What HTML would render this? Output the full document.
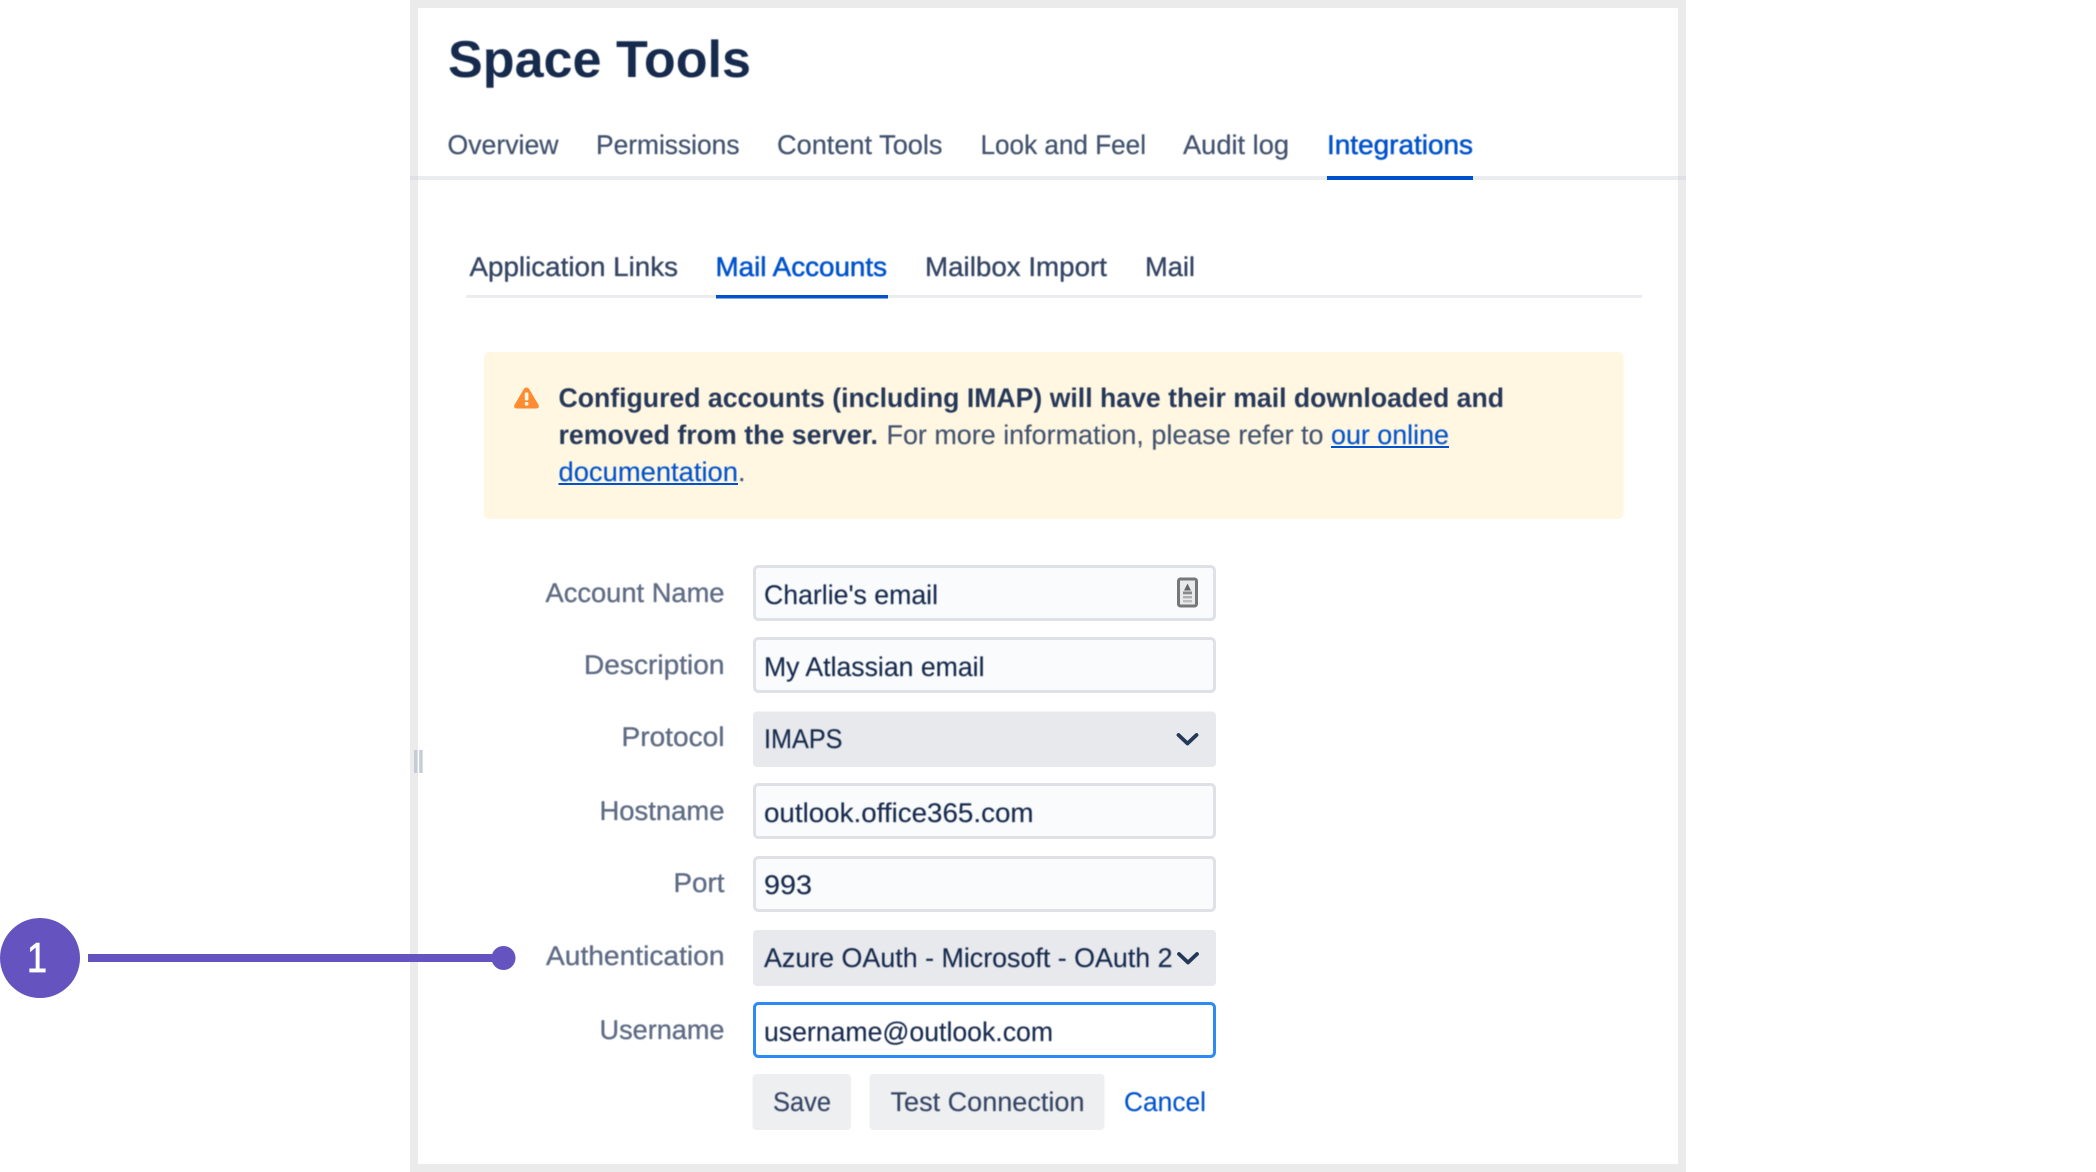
<!DOCTYPE html>
<html lang="en">
<head>
<meta charset="utf-8">
<title>Space Tools</title>
<style>
html,body{margin:0;padding:0;background:#fff;width:2096px;height:1172px;overflow:hidden}
svg{display:block;position:absolute;left:0;top:0}
text{font-family:"Liberation Sans",Arial,sans-serif;text-rendering:geometricPrecision}
.nav{font-size:27px;fill:#42526e;stroke:#42526e;stroke-width:.25}
.sub{font-size:27px;fill:#344563;stroke:#344563;stroke-width:.35}
.act{font-size:27px;fill:#0052cc;stroke:#0052cc;stroke-width:.55}
.lbl{font-size:27px;fill:#5e6c84;stroke:#5e6c84;stroke-width:.35}
.val{font-size:27px;fill:#172b4d;stroke:#172b4d;stroke-width:.15}
.al{font-size:27px;fill:#42526e;stroke:#42526e;stroke-width:.15}
.alb{font-size:27px;fill:#253858;font-weight:700}
.lnk{font-size:27px;fill:#0052cc;stroke:#0052cc;stroke-width:.15}
.btn{font-size:27px;fill:#344563;stroke:#344563;stroke-width:.15}
</style>
</head>
<body>
<svg width="2096" height="1172" viewBox="0 0 2096 1172" xmlns="http://www.w3.org/2000/svg">
<defs>
<clipPath id="azclip"><rect x="760" y="930" width="413" height="56"/></clipPath>
<filter id="soft" x="-5%" y="-5%" width="110%" height="110%"><feGaussianBlur stdDeviation="0.45"/></filter>
</defs>
<rect width="2096" height="1172" fill="#fff"/>
<!-- frame -->
<rect x="410" y="0" width="1276" height="1172" fill="#ebebeb"/>
<rect x="418" y="8" width="1260" height="1156" fill="#fff"/>
<!-- primary nav rule -->
<rect x="418" y="176" width="1260" height="4" fill="#ebecf0"/>
<rect x="410" y="176" width="8" height="4" fill="#dfe0e3"/>
<rect x="1678" y="176" width="8" height="4" fill="#dfe0e3"/>
<rect x="1327" y="176" width="146" height="4" fill="#0052cc"/>
<!-- sub nav rule -->
<rect x="466" y="295" width="1176" height="3" fill="#ebecf0"/>
<rect x="716" y="295" width="172" height="3.5" fill="#0052cc"/>
<!-- alert -->
<rect x="484" y="352" width="1139.5" height="167" rx="5" fill="#fff7e2"/>
<path d="M526.5 387.5c1.2 0 2.2.7 2.8 1.8l9.2 15.6c1.1 1.9-.2 3.6-2.3 3.6h-19.4c-2.1 0-3.4-1.7-2.3-3.6l9.2-15.6c.6-1.1 1.6-1.8 2.8-1.8z" fill="#ff8b33"/>
<rect x="524.8" y="392.5" width="3.6" height="8" rx="1.2" fill="#fff7e2"/>
<rect x="524.8" y="402" width="3.6" height="3.6" rx="1.2" fill="#fff7e2"/>
<!-- inputs -->
<g fill="#fafbfc" stroke="#dfe1e6" stroke-width="3">
<rect x="754.5" y="566.5" width="460" height="53" rx="4"/>
<rect x="754.5" y="638.5" width="460" height="53" rx="4"/>
<rect x="754.5" y="784.5" width="460" height="53" rx="4"/>
<rect x="754.5" y="857.5" width="460" height="53" rx="4"/>
</g>
<rect x="753" y="711.5" width="463" height="55.5" rx="4" fill="#e8e9ec"/>
<rect x="753" y="930" width="463" height="56" rx="4" fill="#e8e9ec"/>
<rect x="754.5" y="1003.5" width="460" height="53" rx="4" fill="#fff" stroke="#2e8af7" stroke-width="3"/>
<!-- buttons -->
<rect x="752.5" y="1074" width="98.5" height="56" rx="4" fill="#eeeff1"/>
<rect x="869.5" y="1074" width="235" height="56" rx="4" fill="#eeeff1"/>
<!-- resize handle -->
<rect x="414" y="750" width="3.4" height="23" fill="#c5ccd6"/>
<rect x="419.2" y="750" width="3.4" height="23" fill="#c5ccd6"/>
<!-- contact icon -->
<rect x="1178.5" y="579" width="18" height="27" rx="2" fill="#e9eaeb" stroke="#777" stroke-width="3"/>
<path d="M1187.5 583.5l3.5 7h-7z" fill="#666"/>
<rect x="1183" y="591.5" width="9" height="2.8" fill="#888"/>
<rect x="1183" y="596" width="9" height="2.4" fill="#b0b0b0"/>
<rect x="1183" y="600" width="9" height="2.4" fill="#bdbdbd"/>
<!-- chevrons -->
<path d="M1178.5 735l9 8.5 9-8.5" fill="none" stroke="#253858" stroke-width="3.8" stroke-linecap="round" stroke-linejoin="round"/>
<path d="M1179 954l9 8.5 9-8.5" fill="none" stroke="#253858" stroke-width="3.8" stroke-linecap="round" stroke-linejoin="round"/>
<g filter="url(#soft)">
<!-- title -->
<text x="448" y="77" font-size="52" font-weight="700" fill="#172b4d" textLength="303" lengthAdjust="spacingAndGlyphs">Space Tools</text>
<!-- primary nav -->
<text class="nav" x="447.5" y="154" textLength="111" lengthAdjust="spacingAndGlyphs">Overview</text>
<text class="nav" x="596" y="154" textLength="143.5" lengthAdjust="spacingAndGlyphs">Permissions</text>
<text class="nav" x="777" y="154" textLength="165.5" lengthAdjust="spacingAndGlyphs">Content Tools</text>
<text class="nav" x="980.5" y="154" textLength="165.5" lengthAdjust="spacingAndGlyphs">Look and Feel</text>
<text class="nav" x="1183" y="154" textLength="106" lengthAdjust="spacingAndGlyphs">Audit log</text>
<text class="act" x="1327" y="154" textLength="146" lengthAdjust="spacingAndGlyphs">Integrations</text>
<!-- sub nav -->
<text class="sub" x="469.5" y="276" textLength="208.5" lengthAdjust="spacingAndGlyphs">Application Links</text>
<text class="act" x="715.5" y="276" textLength="171.5" lengthAdjust="spacingAndGlyphs">Mail Accounts</text>
<text class="sub" x="925" y="276" textLength="182" lengthAdjust="spacingAndGlyphs">Mailbox Import</text>
<text class="sub" x="1145" y="276" textLength="50" lengthAdjust="spacingAndGlyphs">Mail</text>
<!-- alert text -->
<text class="alb" x="558.5" y="407" textLength="945.5" lengthAdjust="spacingAndGlyphs">Configured accounts (including IMAP) will have their mail downloaded and</text>
<text class="alb" x="558.5" y="444" textLength="319.5" lengthAdjust="spacingAndGlyphs">removed from the server.</text>
<text class="al" x="886.5" y="444" textLength="437" lengthAdjust="spacingAndGlyphs">For more information, please refer to</text>
<text class="lnk" x="1331" y="444" textLength="118" lengthAdjust="spacingAndGlyphs">our online</text>
<text class="lnk" x="558.5" y="481" textLength="179.5" lengthAdjust="spacingAndGlyphs">documentation</text>
<text class="al" x="738" y="481">.</text>
<!-- labels -->
<text class="lbl" x="545.5" y="602" textLength="179" lengthAdjust="spacingAndGlyphs">Account Name</text>
<text class="lbl" x="584" y="674" textLength="140.5" lengthAdjust="spacingAndGlyphs">Description</text>
<text class="lbl" x="621.5" y="746" textLength="103" lengthAdjust="spacingAndGlyphs">Protocol</text>
<text class="lbl" x="599.5" y="820" textLength="125" lengthAdjust="spacingAndGlyphs">Hostname</text>
<text class="lbl" x="673.5" y="892" textLength="51" lengthAdjust="spacingAndGlyphs">Port</text>
<text class="lbl" x="546" y="965" textLength="178.5" lengthAdjust="spacingAndGlyphs">Authentication</text>
<text class="lbl" x="599.5" y="1039" textLength="125" lengthAdjust="spacingAndGlyphs">Username</text>
<!-- values -->
<text class="val" x="764" y="604" textLength="174" lengthAdjust="spacingAndGlyphs">Charlie's email</text>
<text class="val" x="764" y="676" textLength="220.5" lengthAdjust="spacingAndGlyphs">My Atlassian email</text>
<text class="val" x="764" y="748" textLength="78.5" lengthAdjust="spacingAndGlyphs">IMAPS</text>
<text class="val" x="764" y="822" textLength="269.5" lengthAdjust="spacingAndGlyphs">outlook.office365.com</text>
<text class="val" x="764" y="894" textLength="48" lengthAdjust="spacingAndGlyphs">993</text>
<g clip-path="url(#azclip)"><text class="val" x="764" y="967" textLength="431" lengthAdjust="spacingAndGlyphs">Azure OAuth - Microsoft - OAuth 2.0</text></g>
<text class="val" x="764" y="1041" textLength="289" lengthAdjust="spacingAndGlyphs">username@outlook.com</text>
<!-- button labels -->
<text class="btn" x="773" y="1111" textLength="58" lengthAdjust="spacingAndGlyphs">Save</text>
<text class="btn" x="890.5" y="1111" textLength="194" lengthAdjust="spacingAndGlyphs">Test Connection</text>
<text class="lnk" x="1124" y="1111" textLength="82" lengthAdjust="spacingAndGlyphs">Cancel</text>
</g>
<!-- link underlines -->
<rect x="1331" y="446" width="118" height="2" fill="#0052cc"/>
<rect x="558.5" y="483" width="179.5" height="2" fill="#0052cc"/>
<!-- callout -->
<rect x="88" y="954" width="410" height="8" fill="#6554c0"/>
<circle cx="503.5" cy="958" r="12" fill="#6554c0"/>
<circle cx="40" cy="958" r="40" fill="#6554c0"/>
<text x="27" y="972" font-size="42" fill="#fff" stroke="#fff" stroke-width=".8" textLength="20" lengthAdjust="spacingAndGlyphs">1</text>
</svg>
</body>
</html>
